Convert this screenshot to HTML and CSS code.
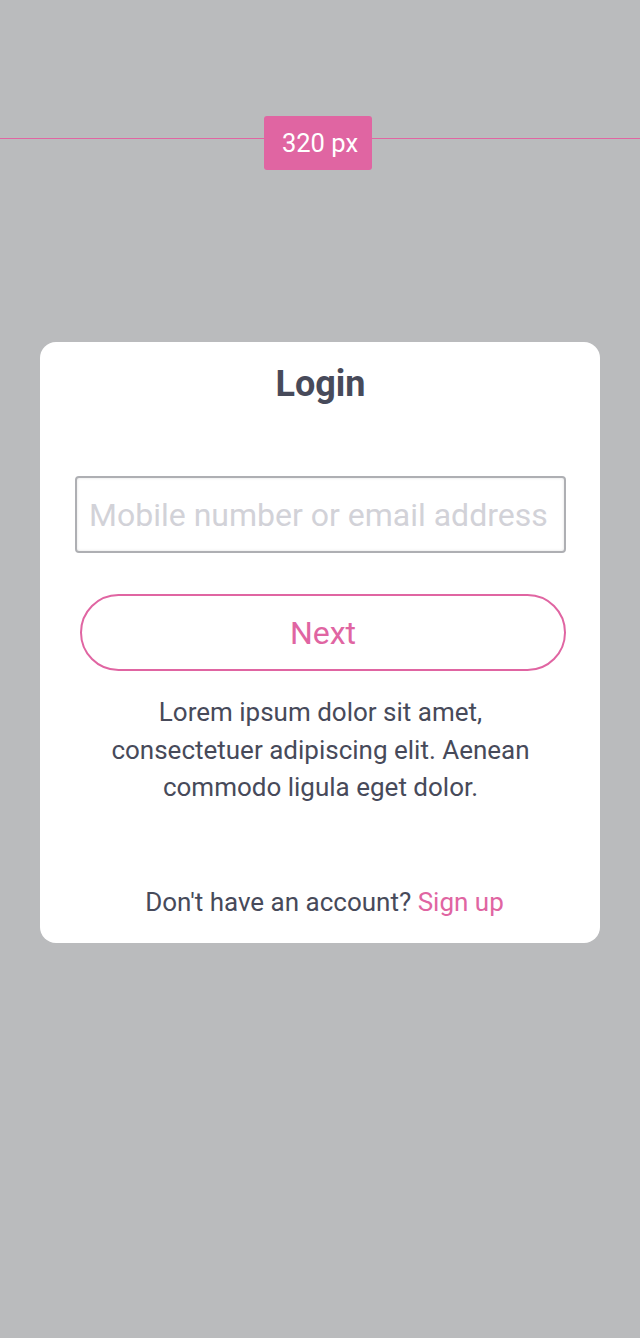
FILE: index.html
```html
<!DOCTYPE html>
<html>
<head>
<meta charset="utf-8">
<link rel="stylesheet" href="styles.css">
</head>
<body>
<div class="page">
  <div class="ruler">
    <div class="ruler-line"></div>
    <div class="badge">320 px</div>
  </div>
  <div class="card">
    <h1 class="title">Login</h1>
    <div class="field">Mobile number or email address</div>
    <div class="btn">Next</div>
    <p class="desc">Lorem ipsum dolor sit amet, consectetuer adipiscing elit. Aenean commodo ligula eget dolor.</p>
    <p class="footer">Don't have an account? <span class="link">Sign up</span></p>
  </div>
</div>
</body>
</html>
```
FILE: styles.css
```css
html, body {
  margin: 0;
  padding: 0;
  background: #babbbd;
  font-family: Roboto, "Liberation Sans", sans-serif;
}
.page {
  width: 640px;
  height: 1338px;
  padding-top: 116px;
  box-sizing: border-box;
}
.ruler {
  position: relative;
  height: 54px;
  display: flex;
  justify-content: center;
  padding-right: 4px;
}
.ruler-line {
  position: absolute;
  left: 0;
  right: 0;
  top: 22px;
  height: 1px;
  background: #e065a2;
}
.badge {
  position: relative;
  width: 108px;
  height: 54px;
  box-sizing: border-box;
  padding-left: 4px;
  background: #e065a2;
  border-radius: 3px;
  color: #fff;
  font-size: 25.5px;
  display: flex;
  align-items: center;
  justify-content: center;
}
.card {
  margin: 172px 40px 0;
  background: #fff;
  border-radius: 16px;
  height: 601px;
  box-sizing: border-box;
  padding: 22px 34px 0 35px;
  display: flex;
  flex-direction: column;
}
.title {
  margin: 0;
  text-align: center;
  font-size: 36px;
  line-height: 40px;
  font-weight: 700;
  color: #474a5a;
}
.field {
  margin-top: 72px;
  height: 77px;
  box-sizing: border-box;
  border: 2px solid #aeafb3;
  border-radius: 4px;
  box-shadow: inset 0 0 3px rgba(0,0,0,0.12);
  display: flex;
  align-items: center;
  padding-left: 12px;
  font-size: 32px;
  color: #d2d2d8;
  white-space: nowrap;
  overflow: hidden;
}
.btn {
  margin: 41px 0 0 5px;
  height: 77px;
  box-sizing: border-box;
  border: 2px solid #e065a2;
  border-radius: 39px;
  display: flex;
  align-items: center;
  justify-content: center;
  font-size: 32px;
  color: #e065a2;
}
.desc {
  margin: 23px 0 0;
  padding: 0 20px;
  text-align: center;
  font-size: 26px;
  line-height: 37.5px;
  color: #474a5a;
}
.footer {
  margin: 79px 0 0;
  padding-left: 8px;
  text-align: center;
  font-size: 26px;
  line-height: 32px;
  color: #474a5a;
}
.link {
  color: #e065a2;
}
```
